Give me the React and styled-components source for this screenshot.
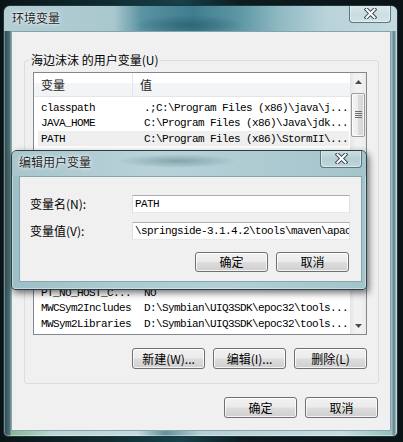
import React from 'react';
import styled, { createGlobalStyle } from 'styled-components';

const UI_FONT = `"Noto Sans CJK SC", "Liberation Sans", sans-serif`;
const MONO = `"Liberation Mono", "Noto Sans CJK SC", monospace`;

const GlobalStyle = createGlobalStyle`
  html, body {
    margin: 0;
    padding: 0;
    width: 403px;
    height: 442px;
    overflow: hidden;
    background: #0c1517;
  }
  #root {
    width: 403px;
    height: 442px;
  }
`;

// rows hidden under the edit dialog are kept as empty placeholders
const rows = [
  { name: 'classpath', value: '.;C:\\Program Files (x86)\\java\\j...' },
  { name: 'JAVA_HOME', value: 'C:\\Program Files (x86)\\Java\\jdk...' },
  { name: 'PATH', value: 'C:\\Program Files (x86)\\StormII\\...', selected: true },
  { id: 'h1' },
  { id: 'h2' },
  { id: 'h3' },
  { id: 'h4' },
  { id: 'h5' },
  { id: 'h6' },
  { id: 'h7' },
  { id: 'h8' },
  { id: 'h9' },
  { name: 'PT_NO_HOST_C...', value: 'NO' },
  { name: 'MWCSym2Includes', value: 'D:\\Symbian\\UIQ3SDK\\epoc32\\tools...' },
  { name: 'MWSym2Libraries', value: 'D:\\Symbian\\UIQ3SDK\\epoc32\\tools...' },
];

const Desktop = styled.div`
  position: relative;
  box-sizing: border-box;
  width: 403px;
  height: 442px;
  padding: 5px 5px 5px 3px;
  background: linear-gradient(90deg, #0a1416 0%, #102a30 25%, #14414b 45%, #0c1c20 60%, #0a1315 100%);
  font-family: ${UI_FONT};
  font-size: 12px;
  color: #000;
`;

/* aero glass window frame */
const Window = styled.div`
  box-sizing: border-box;
  width: 395px;
  height: 432px;
  display: flex;
  flex-direction: column;
  border: 1px solid #22353a;
  border-radius: 7px 7px 5px 5px;
  overflow: hidden;
  padding: 0 6px 5px 7px;
  background:
    linear-gradient(90deg, #2c474d 0, #4f7078 6px, transparent 7px, transparent 386px, #a8c7cd 387px, #607f87 390px, #a3c2c8 392px),
    linear-gradient(90deg, #7db38a 0%, #b8d5d3 12%, #c4dadf 34%, #62919c 41%, #b4d0d5 50%, #c6dce0 86%, #8fbfb6 100%);
  box-shadow: inset 0 0 0 1px rgba(255, 255, 255, 0.35);
`;

const TitleBar = styled.div`
  display: flex;
  justify-content: space-between;
  align-items: flex-start;
  height: 25px;
  margin: 0 ${(p) => (p.$dialog ? '-4px' : '-6px')} 0 -7px;
  padding: 0 ${(p) => (p.$dialog ? '4px' : '6px')} 0 7px;
  background: ${(p) =>
    p.$dialog
      ? `radial-gradient(ellipse 60px 7px at 165px 10px, rgba(70, 110, 120, 0.45), transparent),
         linear-gradient(90deg, #a9c6cd 0%, #b8d2d8 40%, #aecbd2 70%, #a4c4cb 100%)`
      : `radial-gradient(ellipse 55px 10px at 185px 19px, rgba(40, 95, 112, 0.75), transparent),
         linear-gradient(90deg, #b3ced4 0%, #a9c8ce 28%, #5a93a2 35%, #3f7d8f 48%, #5e97a5 60%, #8fb9c3 70%, #b8d3d9 82%, #c4dadf 100%)`};
`;

const Title = styled.span`
  margin-top: ${(p) => (p.$dialog ? '3px' : '4px')};
  padding-left: ${(p) => (p.$dialog ? '0' : '1px')};
  line-height: 16px;
  font-size: 12px;
  color: #1b2426;
  text-shadow: 0 0 5px rgba(255, 255, 255, 0.95), 0 0 2px rgba(255, 255, 255, 0.9);
`;

const CloseButton = styled.div`
  box-sizing: border-box;
  width: 42px;
  height: 18px;
  margin-top: -1px;
  display: flex;
  align-items: center;
  justify-content: center;
  border: 1px solid #587780;
  border-top: none;
  border-radius: 0 0 4px 4px;
  background: linear-gradient(rgba(255, 255, 255, 0.45), rgba(255, 255, 255, 0.15) 55%, rgba(255, 255, 255, 0.3));
  box-shadow: inset 0 0 0 1px rgba(255, 255, 255, 0.45);
`;

const CloseGlyph = () => (
  <svg width="13" height="11" viewBox="0 0 13 11">
    <path d="M2.5 1.5 L10.5 9.5 M10.5 1.5 L2.5 9.5" stroke="#3a4b50" strokeWidth="4" strokeLinecap="square" fill="none" />
    <path d="M2.5 1.5 L10.5 9.5 M10.5 1.5 L2.5 9.5" stroke="#ffffff" strokeWidth="2" strokeLinecap="square" fill="none" />
  </svg>
);

const Client = styled.div`
  flex: 1;
  display: flex;
  flex-direction: column;
  border: 1px solid #86a2aa;
  background: #f0f0f0;
  padding: 20px 11px 0 12px;
`;

const Group = styled.fieldset`
  margin: 0;
  min-width: 0;
  padding: 4px 11px 14px 8px;
  border: 1px solid #d5dfe5;
  border-radius: 3px;
  display: flex;
  flex-direction: column;
`;

const Legend = styled.legend`
  margin-left: -4px;
  padding: 0 2px;
  line-height: 16px;
  font-size: 12px;
`;

const ListBox = styled.div`
  box-sizing: border-box;
  height: 263px;
  display: flex;
  border: 1px solid #828790;
  background: #fff;
`;

const ListMain = styled.div`
  flex: 1;
  min-width: 0;
  overflow: hidden;
`;

const Header = styled.div`
  display: grid;
  grid-template-columns: 99px 1fr;
  height: 23px;
  border-bottom: 1px solid #e5e5e5;
  background: linear-gradient(#ffffff 0%, #ffffff 42%, #f4f5f7 43%, #f2f3f5 100%);
`;

const HeaderCell = styled.div`
  display: flex;
  align-items: center;
  padding-left: 7px;
  border-right: ${(p) => (p.$last ? 'none' : '1px solid #e3e6ea')};
  font-size: 12px;
  color: #1c1c1c;
`;

const Rows = styled.div`
  padding-top: 3px;
`;

const Row = styled.div`
  display: grid;
  grid-template-columns: 99px 1fr;
  height: 15.43px;
  align-items: center;
  margin: 0 1px 0 4px;
  background: ${(p) => (p.$selected ? '#efefef' : 'transparent')};
  font-family: ${MONO};
  font-size: 11px;
  letter-spacing: -0.6px;
  color: #000;
`;

const Cell = styled.div`
  padding-left: ${(p) => (p.$first ? '3px' : '7px')};
  white-space: nowrap;
  overflow: hidden;
`;

const ScrollBar = styled.div`
  width: 16px;
  display: flex;
  flex-direction: column;
  background: linear-gradient(90deg, #e4e4e4 0%, #f1f1f1 30%, #f1f1f1 70%, #e9e9e9 100%);
`;

const Arrow = styled.div`
  height: 17px;
  display: flex;
  align-items: center;
  justify-content: center;
`;

const Track = styled.div`
  flex: 1;
`;

const Thumb = styled.div`
  box-sizing: border-box;
  height: 44px;
  margin: 3px 1px 0;
  display: flex;
  align-items: center;
  justify-content: center;
  border: 1px solid #9c9c9c;
  border-radius: 2px;
  background: linear-gradient(90deg, #f6f6f6 0%, #ececec 50%, #dcdcdc 51%, #d6d6d6 100%);
  box-shadow: inset 0 0 0 1px rgba(255, 255, 255, 0.7);
`;

const ButtonRow = styled.div`
  display: flex;
  justify-content: flex-end;
  gap: 8px;
  margin-top: ${(p) => p.$top || 0}px;
  margin-right: ${(p) => p.$right || 0}px;
`;

const Button = styled.button`
  box-sizing: border-box;
  width: 73px;
  height: ${(p) => p.$h || 21}px;
  padding: 0;
  border: 1px solid #707070;
  border-radius: 3px;
  background: linear-gradient(#f2f2f2 0%, #ebebeb 48%, #dddddd 52%, #cfcfcf 100%);
  box-shadow: inset 0 0 0 1px rgba(255, 255, 255, 0.75);
  font-family: ${UI_FONT};
  font-size: 12px;
  line-height: 16px;
  color: #000;
`;

/* edit dialog floating over the main window */
const Dialog = styled.div`
  position: absolute;
  left: 11px;
  top: 150px;
  box-sizing: border-box;
  width: 356px;
  height: 140px;
  display: flex;
  flex-direction: column;
  border: 1px solid #2c3f45;
  border-radius: 6px 6px 4px 4px;
  overflow: hidden;
  padding: 0 4px 7px 7px;
  background: linear-gradient(90deg, #9cc0c8 0%, #aacbd2 30%, #b2d0d6 60%, #a1c4cc 100%);
  box-shadow: 2px 3px 7px rgba(0, 0, 0, 0.55), inset 0 0 0 1px rgba(255, 255, 255, 0.4);
`;

const DialogClient = styled.div`
  flex: 1;
  display: flex;
  flex-direction: column;
  border: 1px solid #88a5ad;
  background: #f0f0f0;
  padding: 18px 11px 0 10px;
`;

const FieldGrid = styled.div`
  display: grid;
  grid-template-columns: 102px 218px;
  row-gap: 9px;
  align-items: center;
`;

const Label = styled.span`
  font-size: 12px;
  line-height: 18px;
`;

const Input = styled.div`
  box-sizing: border-box;
  height: 18px;
  display: flex;
  align-items: center;
  padding-left: 2px;
  overflow: hidden;
  white-space: nowrap;
  background: #fff;
  border: 1px solid #dbdfe6;
  border-top-color: #abadb3;
  border-bottom-color: #e3e9ef;
  font-family: ${MONO};
  font-size: 11px;
  letter-spacing: -0.6px;
`;

const UpArrow = () => (
  <svg width="7" height="4" viewBox="0 0 7 4">
    <path d="M0 4 L3.5 0 L7 4 Z" fill="#4d4d4d" />
  </svg>
);

const DownArrow = () => (
  <svg width="7" height="4" viewBox="0 0 7 4">
    <path d="M0 0 L7 0 L3.5 4 Z" fill="#4d4d4d" />
  </svg>
);

const Grip = () => (
  <svg width="7" height="8" viewBox="0 0 7 8">
    {[0, 2, 4, 6].map((y) => (
      <rect key={y} x="0" y={y} width="7" height="1" fill="#6e6e6e" />
    ))}
  </svg>
);

const App = () => {
  return (
    <>
      <GlobalStyle />
      <Desktop>
        <Window>
          <TitleBar>
            <Title>环境变量</Title>
            <CloseButton>
              <CloseGlyph />
            </CloseButton>
          </TitleBar>
          <Client>
            <Group>
              <Legend>海边沫沫 的用户变量(U)</Legend>
              <ListBox>
                <ListMain>
                  <Header>
                    <HeaderCell>变量</HeaderCell>
                    <HeaderCell $last>值</HeaderCell>
                  </Header>
                  <Rows>
                    {rows.map((r) => (
                      <Row key={r.name || r.id} $selected={r.selected}>
                        <Cell $first>{r.name}</Cell>
                        <Cell>{r.value}</Cell>
                      </Row>
                    ))}
                  </Rows>
                </ListMain>
                <ScrollBar>
                  <Arrow>
                    <UpArrow />
                  </Arrow>
                  <Track>
                    <Thumb>
                      <Grip />
                    </Thumb>
                  </Track>
                  <Arrow>
                    <DownArrow />
                  </Arrow>
                </ScrollBar>
              </ListBox>
              <ButtonRow $top={13}>
                <Button>新建(W)...</Button>
                <Button>编辑(I)...</Button>
                <Button>删除(L)</Button>
              </ButtonRow>
            </Group>
            <ButtonRow $top={13} $right={1}>
              <Button>确定</Button>
              <Button>取消</Button>
            </ButtonRow>
          </Client>
        </Window>

        <Dialog>
          <TitleBar $dialog>
            <Title $dialog>编辑用户变量</Title>
            <CloseButton>
              <CloseGlyph />
            </CloseButton>
          </TitleBar>
          <DialogClient>
            <FieldGrid>
              <Label>变量名(N):</Label>
              <Input>PATH</Input>
              <Label>变量值(V):</Label>
              <Input>\springside-3.1.4.2\tools\maven\apac</Input>
            </FieldGrid>
            <ButtonRow $top={12} $right={1}>
              <Button $h={20}>确定</Button>
              <Button $h={20}>取消</Button>
            </ButtonRow>
          </DialogClient>
        </Dialog>
      </Desktop>
    </>
  );
};

export default App;
